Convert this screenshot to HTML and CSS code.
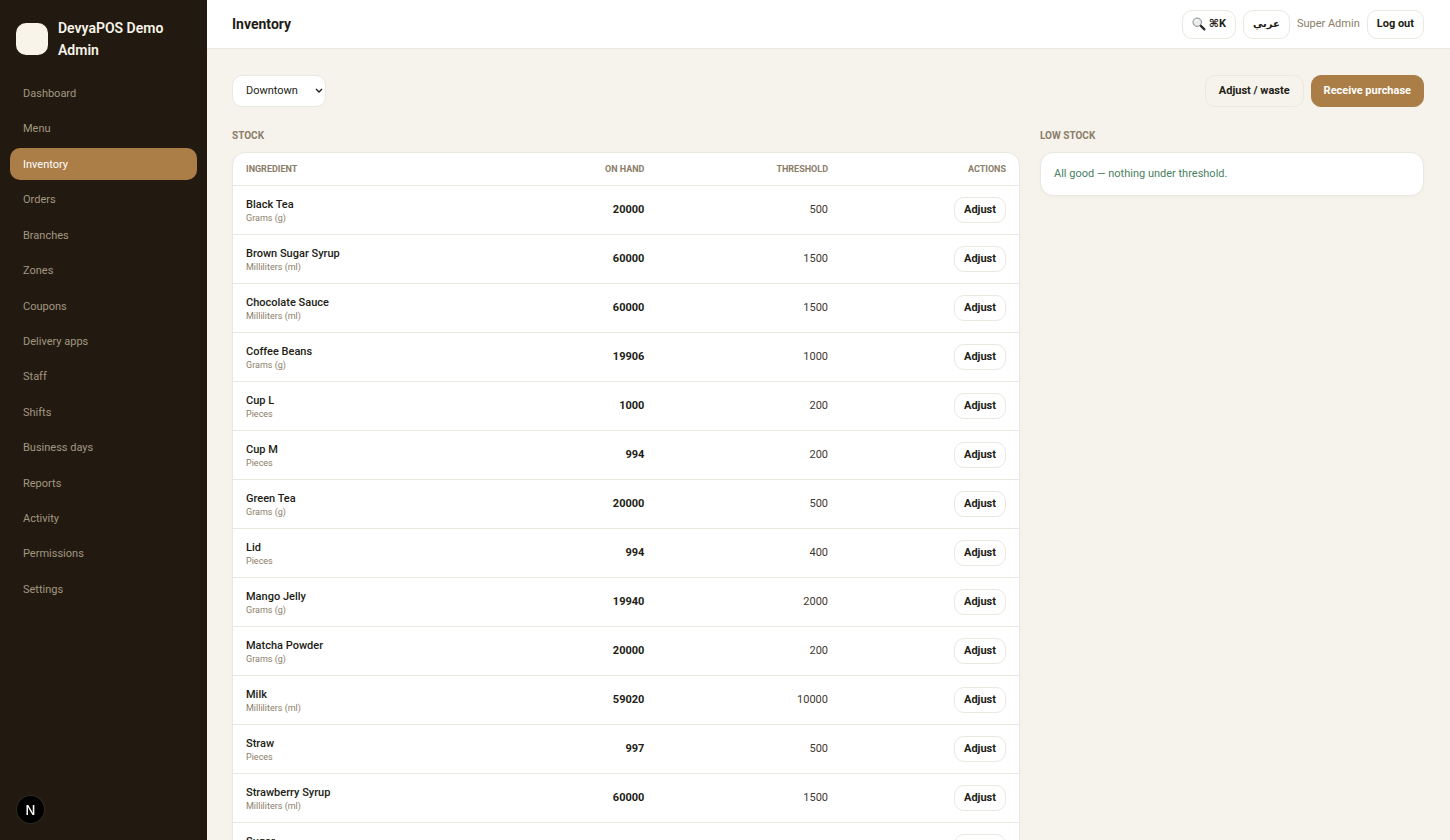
FILE: index.html
```html
<!DOCTYPE html>
<html lang="en">
<head>
  <meta charset="utf-8">
  <meta name="viewport" content="width=device-width, initial-scale=1">
  <title>Inventory - DevyaPOS Demo Admin</title>
  <link rel="stylesheet" href="styles.css">
</head>
<body>

  <div class="app">
    <aside class="sidebar">
      <div class="brand">
        <span class="brand-logo"></span>
        <span class="brand-name">DevyaPOS Demo Admin</span>
      </div>
      <nav class="nav">
        <a href="#">Dashboard</a>
        <a href="#">Menu</a>
        <a href="#" class="active">Inventory</a>
        <a href="#">Orders</a>
        <a href="#">Branches</a>
        <a href="#">Zones</a>
        <a href="#">Coupons</a>
        <a href="#">Delivery apps</a>
        <a href="#">Staff</a>
        <a href="#">Shifts</a>
        <a href="#">Business days</a>
        <a href="#">Reports</a>
        <a href="#">Activity</a>
        <a href="#">Permissions</a>
        <a href="#">Settings</a>
      </nav>
    </aside>

    <div class="content">
      <header class="topbar">
        <h1>Inventory</h1>
        <div class="topbar-actions">
          <button class="btn btn-top btn-search" aria-label="Search">
            <svg width="14" height="14" viewBox="0 0 14 14" fill="none">
              <path d="M8.6 8.6 12.4 12.4" stroke="#2b2b2b" stroke-width="2.2" stroke-linecap="round"/>
              <circle cx="5.2" cy="5.2" r="4.2" fill="#e9edef" stroke="#858585" stroke-width="1"/>
              <path d="M3 4.6C3.3 3.6 4 3 5 2.8" stroke="#fff" stroke-linecap="round"/>
            </svg>
            <span>⌘K</span>
          </button>
          <button class="btn btn-top btn-lang" lang="ar">عربي</button>
          <span class="user">Super Admin</span>
          <button class="btn btn-top">Log out</button>
        </div>
      </header>

      <main class="page">
        <div class="toolbar">
          <select class="branch" aria-label="Branch">
            <option>Downtown</option>
          </select>
          <div class="toolbar-actions">
            <button class="btn btn-clear">Adjust / waste</button>
            <button class="btn btn-primary">Receive purchase</button>
          </div>
        </div>

        <div class="columns">
          <section>
            <h2>Stock</h2>
            <div class="card">
              <table>
                <thead>
                  <tr>
                    <th class="col-name">Ingredient</th>
                    <th class="col-hand">On hand</th>
                    <th class="col-threshold">Threshold</th>
                    <th class="col-actions">Actions</th>
                  </tr>
                </thead>
                <tbody id="stockRows"></tbody>
              </table>
            </div>
          </section>

          <section>
            <h2>Low stock</h2>
            <div class="card low-stock">All good — nothing under threshold.</div>
          </section>
        </div>
      </main>
    </div>
  </div>

  <button class="dev-badge" aria-label="Open dev tools">N</button>

  <script>
    const units = {
      g: 'Grams (g)',
      ml: 'Milliliters (ml)',
      pc: 'Pieces'
    };

    const stock = [
      ['Black Tea', 'g', 20000, 500],
      ['Brown Sugar Syrup', 'ml', 60000, 1500],
      ['Chocolate Sauce', 'ml', 60000, 1500],
      ['Coffee Beans', 'g', 19906, 1000],
      ['Cup L', 'pc', 1000, 200],
      ['Cup M', 'pc', 994, 200],
      ['Green Tea', 'g', 20000, 500],
      ['Lid', 'pc', 994, 400],
      ['Mango Jelly', 'g', 19940, 2000],
      ['Matcha Powder', 'g', 20000, 200],
      ['Milk', 'ml', 59020, 10000],
      ['Straw', 'pc', 997, 500],
      ['Strawberry Syrup', 'ml', 60000, 1500],
      ['Sugar', 'g', 20000, 1000]
    ];

    const rows = document.getElementById('stockRows');
    stock.forEach(([name, unit, onHand, threshold]) => {
      const row = document.createElement('tr');
      row.innerHTML = `
        <td><div class="item-name">${name}</div><div class="item-unit">${units[unit]}</div></td>
        <td class="on-hand">${onHand}</td>
        <td class="threshold">${threshold}</td>
        <td><button class="btn btn-small">Adjust</button></td>
      `;
      rows.appendChild(row);
    });
  </script>

</body>
</html>
```

FILE: styles.css
```css
:root {
  --bg: #f6f3ec;
  --dark: #221a11;
  --accent: #ab7e48;
  --text: #221c15;
  --muted: #8b7d69;
  --line: #ebe7e1;
  --green: #4a8062;
}

* {
  box-sizing: border-box;
}

body {
  margin: 0;
  font-family: Roboto, "DejaVu Sans", sans-serif;
  font-size: 11px;
  line-height: 16px;
  color: var(--text);
  background: var(--bg);
}

h1, h2 {
  margin: 0;
}

.app {
  display: flex;
  height: 100vh;
}

/* Sidebar */
.sidebar {
  width: 207px;
  flex-shrink: 0;
  padding: 17px 10px;
  background: var(--dark);
}

.brand {
  display: flex;
  align-items: center;
  gap: 10px;
  padding: 0 6px;
  margin-bottom: 16px;
}

.brand-logo {
  width: 32px;
  height: 32px;
  flex-shrink: 0;
  border-radius: 10px;
  background: #f8f4ea;
}

.brand-name {
  font-size: 14px;
  line-height: 22px;
  font-weight: 600;
  color: #f8f4ea;
}

.nav {
  display: flex;
  flex-direction: column;
  justify-content: space-between;
  min-height: 528px;
}

.nav a {
  padding: 9px 13px 7px;
  border-radius: 10px;
  color: #a39780;
  text-decoration: none;
}

.nav a:hover {
  color: #fff;
}

.nav a.active {
  background: var(--accent);
  color: #fff;
}

/* Top bar */
.content {
  flex: 1;
  min-width: 0;
  overflow-y: auto;
  scrollbar-width: none;
}

.topbar {
  display: flex;
  align-items: center;
  justify-content: space-between;
  height: 49px;
  padding: 0 26px 0 25px;
  background: #fff;
  border-bottom: 1px solid var(--line);
}

.topbar h1 {
  font-size: 14px;
  font-weight: 700;
}

.topbar-actions,
.toolbar-actions {
  display: flex;
  align-items: center;
  gap: 7px;
}

.user {
  color: var(--muted);
}

/* Buttons */
.btn {
  padding: 0 13px;
  height: 32px;
  border: 1px solid var(--line);
  border-radius: 10px;
  background: #fff;
  color: var(--text);
  font: inherit;
  font-weight: 700;
  white-space: nowrap;
  cursor: pointer;
}

.btn-top {
  height: 29px;
  padding: 0 9px;
}

.btn-search {
  display: flex;
  align-items: center;
  gap: 3px;
}

.btn-lang {
  font-size: 10px;
}

.btn-small {
  height: 26px;
  padding: 0 9px;
}

.btn-clear {
  background: transparent;
}

.btn-primary {
  padding: 0 12px;
  background: var(--accent);
  border-color: var(--accent);
  color: #fff;
}

/* Page */
.page {
  padding: 26px 26px 26px 25px;
}

.toolbar {
  display: flex;
  align-items: center;
  justify-content: space-between;
  margin-bottom: 21px;
}

.branch {
  width: 94px;
  height: 32px;
  padding: 0 13px;
  border: 1px solid var(--line);
  border-radius: 10px;
  appearance: none;
  background: #fff url("data:image/svg+xml,%3Csvg xmlns='http://www.w3.org/2000/svg' width='8' height='6' fill='none'%3E%3Cpath d='M1 1l3 3 3-3' stroke='%23221c15' stroke-width='1.3'/%3E%3C/svg%3E") no-repeat right 2px center;
  color: var(--text);
  font: inherit;
}

.columns {
  display: grid;
  grid-template-columns: minmax(0, 1fr) 384px;
  gap: 20px;
  align-items: start;
}

h2 {
  margin-bottom: 8px;
  font-size: 10px;
  font-weight: 700;
  text-transform: uppercase;
  color: var(--muted);
}

.card {
  border: 1px solid var(--line);
  border-radius: 13px;
  background: #fff;
  box-shadow: 0 1px 3px rgba(34, 26, 17, 0.03);
}

.low-stock {
  padding: 13px;
  color: var(--green);
}

/* Stock table */
table {
  width: 100%;
  border-collapse: collapse;
  table-layout: fixed;
}

th,
td {
  padding: 0 13px;
  text-align: right;
}

th:first-child,
td:first-child {
  text-align: left;
}

th {
  height: 32px;
  font-size: 9px;
  font-weight: 700;
  text-transform: uppercase;
  color: var(--muted);
}

td {
  height: 49px;
  padding-top: 1px;
  border-top: 1px solid var(--line);
}

.col-name {
  width: 38%;
}

.col-hand {
  width: 16%;
}

.col-actions {
  width: 178px;
}

.item-name {
  line-height: 15px;
  font-weight: 500;
}

.item-unit {
  font-size: 9px;
  line-height: 12px;
  color: var(--muted);
}

.on-hand {
  font-weight: 700;
}

.threshold {
  color: #3f3830;
}

/* Dev tools badge, floats over the sidebar */
.dev-badge {
  position: fixed;
  left: 17px;
  bottom: 17px;
  width: 27px;
  height: 27px;
  padding: 0;
  border: none;
  border-radius: 50%;
  background: #000;
  color: #fff;
  font-family: Inter, sans-serif;
  font-size: 13px;
  font-weight: 500;
  box-shadow: 0 0 0 1px #2f2820;
}
```
